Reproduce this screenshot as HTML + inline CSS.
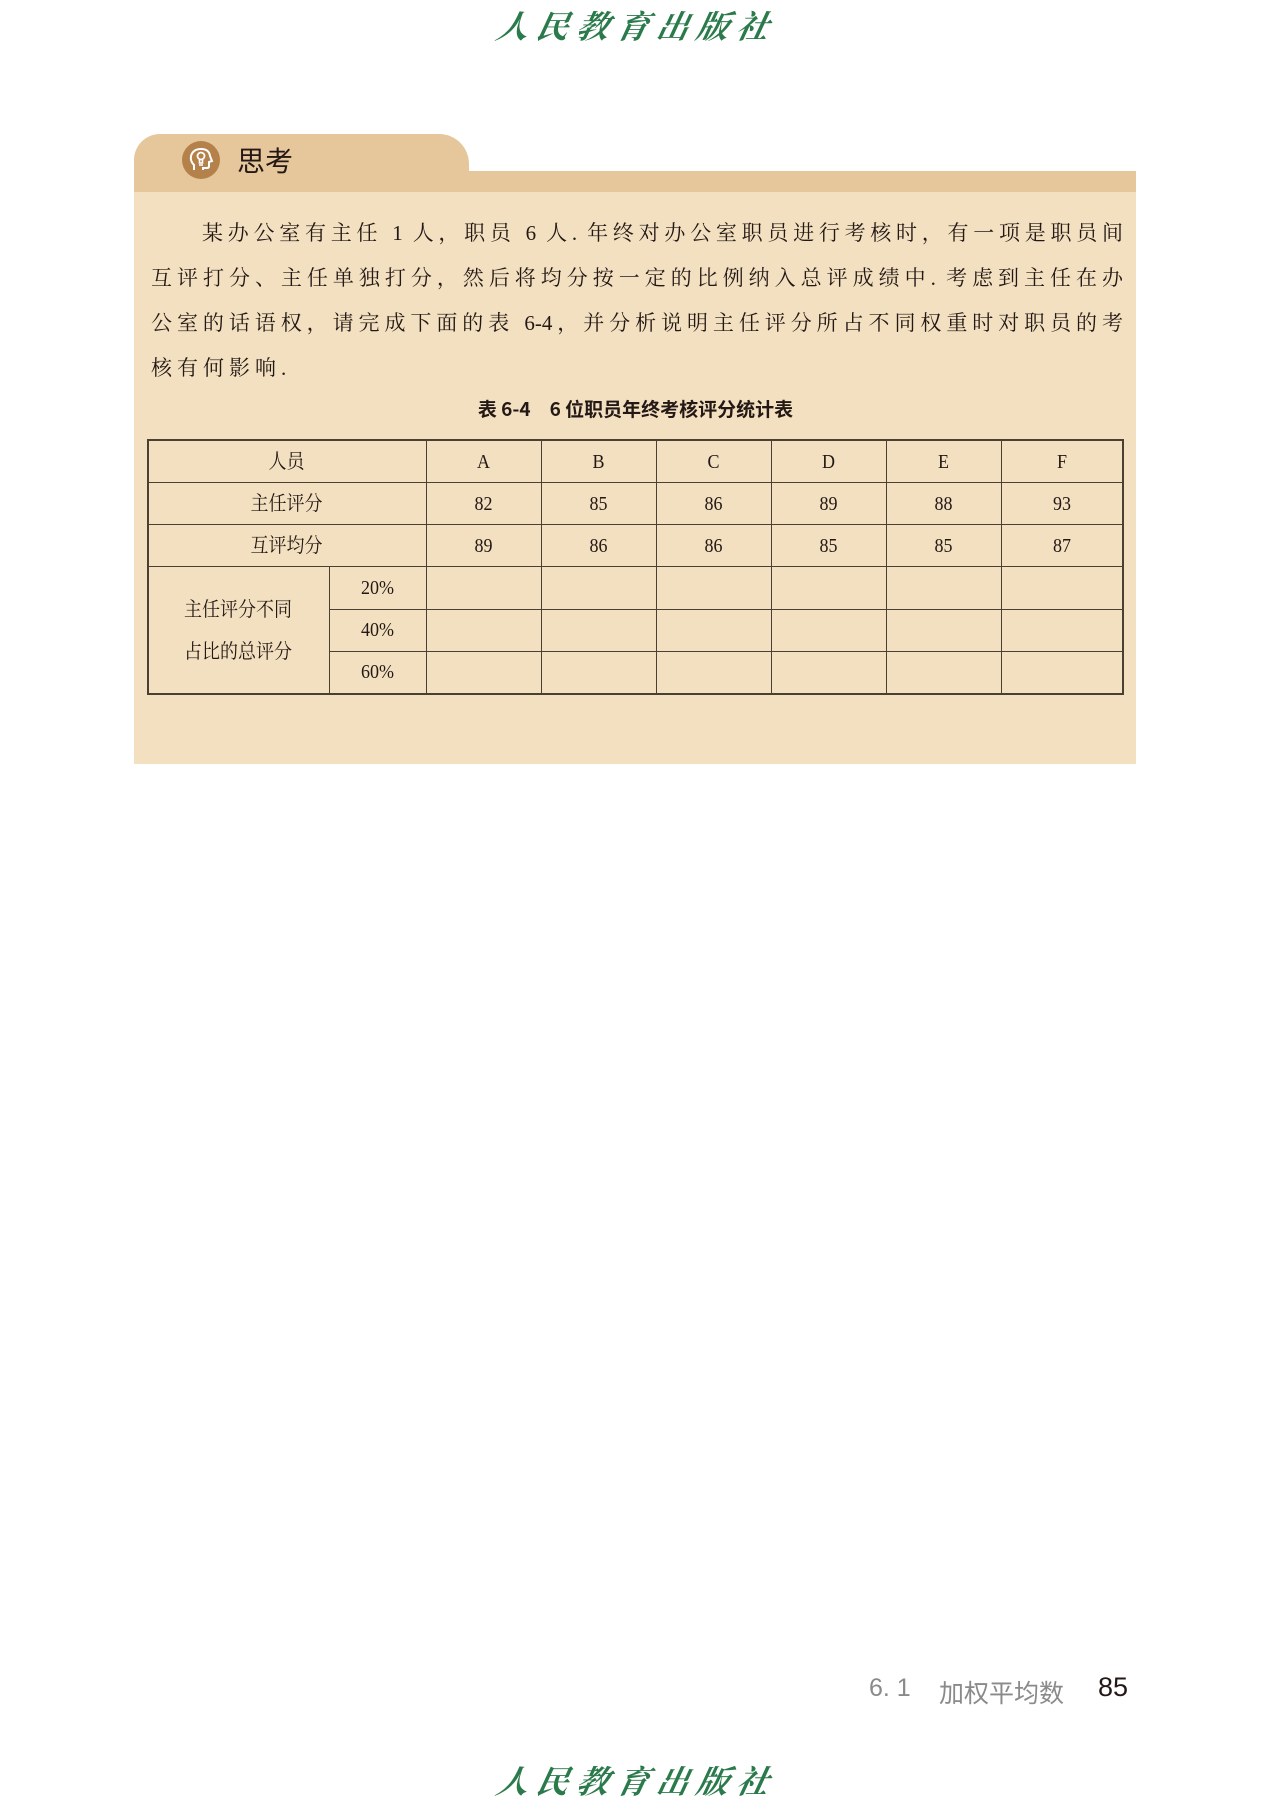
<!DOCTYPE html>
<html><head><meta charset="utf-8"><style>
html,body{margin:0;padding:0;background:#fff;}
body{width:1271px;height:1800px;position:relative;overflow:hidden;font-family:"Liberation Serif","Noto Serif CJK SC",serif;}
.logo{position:absolute;left:485px;width:305px;text-align:center;color:#2b7a4b;font-family:"Noto Serif CJK SC",serif;font-style:italic;font-weight:bold;font-size:32px;letter-spacing:8px;transform:skewX(-12deg);}
.box{position:absolute;left:134px;top:192px;width:1002px;height:572px;background:#f2e0c0;}
.band{position:absolute;left:134px;top:171px;width:1002px;height:21px;background:#e5c79b;}
.tab{position:absolute;left:134px;top:134px;width:335px;height:58px;background:#e5c79b;border-radius:26px 30px 0 0;}
.icon{position:absolute;left:182px;top:141px;width:38px;height:38px;border-radius:50%;background:#b5814a;}
.title{position:absolute;left:237px;top:142px;font-family:"Noto Sans CJK SC",sans-serif;font-size:28px;line-height:36px;color:#231815;}
.line{position:absolute;left:151px;width:972px;font-size:21px;line-height:30px;color:#231815;text-align:justify;text-align-last:justify;white-space:nowrap;}
.cap{position:absolute;left:0;width:1271px;top:395px;text-align:center;font-family:"Noto Sans CJK SC",sans-serif;font-weight:bold;font-size:19px;color:#231815;}
.tl{position:absolute;background:#4a3f33;}
.c{position:absolute;text-align:center;font-size:20px;line-height:42px;color:#231815;transform:scaleX(0.9);}
.foot{position:absolute;top:1674px;font-family:"Liberation Sans","Noto Sans CJK SC",sans-serif;font-size:25px;color:#8a8a8a;}
</style></head><body>
<div class="logo" style="top:2px;">人民教育出版社</div>

<div class="band"></div>
<div class="tab"></div>
<div class="box"></div>
<div class="icon"><svg width="38" height="38" viewBox="0 0 38 38"><path d="M12 29 V24 Q8 20 9 15 Q11 8 19 8 Q27 8 28 15 L30 20 L27 21 V25 Q27 27 25 27 H21 V29" fill="none" stroke="#fff" stroke-width="2"/><circle cx="19" cy="15" r="3.5" fill="none" stroke="#fff" stroke-width="1.8"/><path d="M17.5 19 V22 H20.5 V19 M17 24 H21" stroke="#fff" stroke-width="1.6" fill="none"/></svg></div>
<div class="title">思考</div>

<div class="line" style="top:218px;left:202px;width:921px;">某办公室有主任 1 人，职员 6 人. 年终对办公室职员进行考核时，有一项是职员间</div>
<div class="line" style="top:263px;">互评打分、主任单独打分，然后将均分按一定的比例纳入总评成绩中. 考虑到主任在办</div>
<div class="line" style="top:308px;">公室的话语权，请完成下面的表 6-4，并分析说明主任评分所占不同权重时对职员的考</div>
<div class="line" style="top:353px;text-align-last:left;letter-spacing:5px;">核有何影响.</div>
<div class="cap">表 6-4　6 位职员年终考核评分统计表</div>

<div class="tl" style="left:147px;top:439px;width:977px;height:2px;"></div>
<div class="tl" style="left:147px;top:693px;width:977px;height:2px;"></div>
<div class="tl" style="left:147px;top:439px;width:2px;height:256px;"></div>
<div class="tl" style="left:1122px;top:439px;width:2px;height:256px;"></div>
<div class="tl" style="left:147px;top:482px;width:977px;height:1px;"></div>
<div class="tl" style="left:147px;top:524px;width:977px;height:1px;"></div>
<div class="tl" style="left:147px;top:566px;width:977px;height:1px;"></div>
<div class="tl" style="left:329px;top:609px;width:795px;height:1px;"></div>
<div class="tl" style="left:329px;top:651px;width:795px;height:1px;"></div>
<div class="tl" style="left:329px;top:566px;width:1px;height:128px;"></div>
<div class="tl" style="left:426px;top:440px;width:1px;height:254px;"></div>
<div class="tl" style="left:541px;top:440px;width:1px;height:254px;"></div>
<div class="tl" style="left:656px;top:440px;width:1px;height:254px;"></div>
<div class="tl" style="left:771px;top:440px;width:1px;height:254px;"></div>
<div class="tl" style="left:886px;top:440px;width:1px;height:254px;"></div>
<div class="tl" style="left:1001px;top:440px;width:1px;height:254px;"></div>

<div class="c" style="left:147px;width:279px;top:441px;">人员</div>
<div class="c" style="left:426px;width:115px;top:441px;">A</div>
<div class="c" style="left:541px;width:115px;top:441px;">B</div>
<div class="c" style="left:656px;width:115px;top:441px;">C</div>
<div class="c" style="left:771px;width:115px;top:441px;">D</div>
<div class="c" style="left:886px;width:115px;top:441px;">E</div>
<div class="c" style="left:1001px;width:122px;top:441px;">F</div>

<div class="c" style="left:147px;width:279px;top:483px;">主任评分</div>
<div class="c" style="left:426px;width:115px;top:483px;">82</div>
<div class="c" style="left:541px;width:115px;top:483px;">85</div>
<div class="c" style="left:656px;width:115px;top:483px;">86</div>
<div class="c" style="left:771px;width:115px;top:483px;">89</div>
<div class="c" style="left:886px;width:115px;top:483px;">88</div>
<div class="c" style="left:1001px;width:122px;top:483px;">93</div>

<div class="c" style="left:147px;width:279px;top:525px;">互评均分</div>
<div class="c" style="left:426px;width:115px;top:525px;">89</div>
<div class="c" style="left:541px;width:115px;top:525px;">86</div>
<div class="c" style="left:656px;width:115px;top:525px;">86</div>
<div class="c" style="left:771px;width:115px;top:525px;">85</div>
<div class="c" style="left:886px;width:115px;top:525px;">85</div>
<div class="c" style="left:1001px;width:122px;top:525px;">87</div>

<div class="c" style="left:147px;width:182px;top:589px;line-height:42px;">主任评分不同<br>占比的总评分</div>
<div class="c" style="left:329px;width:97px;top:567px;">20%</div>
<div class="c" style="left:329px;width:97px;top:609px;">40%</div>
<div class="c" style="left:329px;width:97px;top:651px;">60%</div>

<div class="foot" style="left:869px;">6. 1</div>
<div class="foot" style="left:939px;">加权平均数</div>
<div class="foot" style="left:1098px;color:#231815;font-size:27px;top:1672px;">85</div>

<div class="logo" style="top:1757px;">人民教育出版社</div>
</body></html>
